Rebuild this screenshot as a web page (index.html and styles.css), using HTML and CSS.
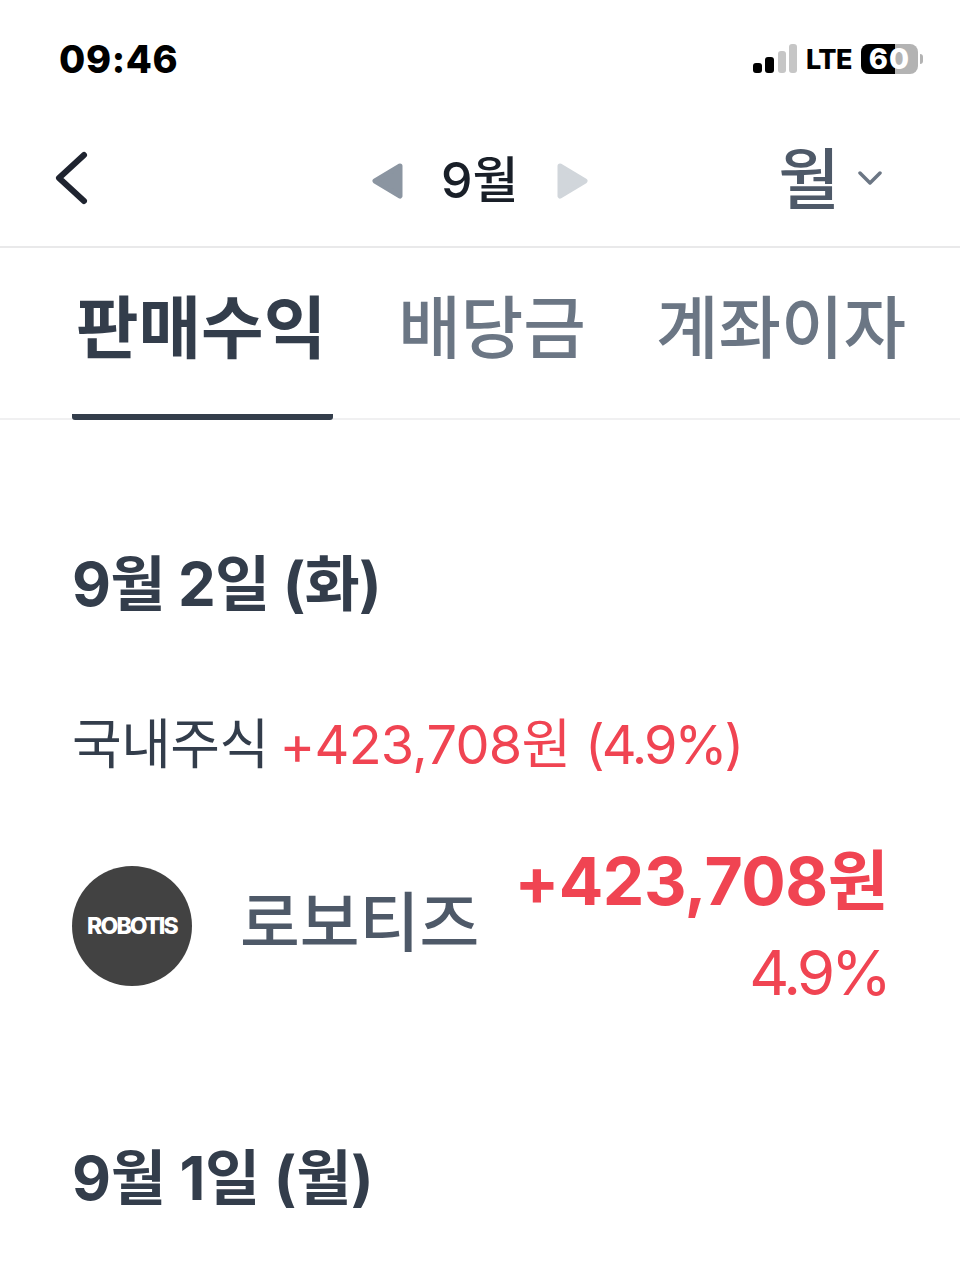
FILE: index.html
```html
<!DOCTYPE html>
<html lang="ko">
<head>
<meta charset="utf-8">
<title>판매수익</title>
<link rel="stylesheet" href="styles.css">
</head>
<body>
<div class="status">
  <span class="time">09:46</span>
  <div class="status-right">
    <svg class="signal" width="44" height="30" viewBox="0 0 44 30"><rect x="0" y="19" width="9" height="10" rx="3" fill="#000"/><rect x="12" y="13" width="9" height="16" rx="3" fill="#000"/><rect x="25" y="7" width="8" height="22" rx="3" fill="#c6c6c6"/><rect x="36" y="0" width="8" height="29" rx="3" fill="#c6c6c6"/></svg>
    <span class="lte">LTE</span>
    <span class="battery"><span class="batt-fill"></span><span class="batt-text">60</span></span>
    <span class="batt-cap"></span>
  </div>
</div>
<header class="nav">
  <svg class="back" width="36" height="60" viewBox="0 0 36 60"><path d="M30 7 L5 30 L30 53" fill="none" stroke="#1f2430" stroke-width="6" stroke-linecap="round" stroke-linejoin="round"/></svg>
  <div class="month">
    <svg class="arrow" width="34" height="38" viewBox="0 0 34 38"><path d="M30 4 L5 19 L30 34 Z" fill="#8b95a1" stroke="#8b95a1" stroke-width="5" stroke-linejoin="round"/></svg>
    <span class="month-label">9월</span>
    <svg class="arrow" width="34" height="38" viewBox="0 0 34 38"><path d="M4 4 L29 19 L4 34 Z" fill="#d1d6db" stroke="#d1d6db" stroke-width="5" stroke-linejoin="round"/></svg>
  </div>
  <div class="unit">
    <span class="unit-label">월</span>
    <svg width="24" height="16" viewBox="0 0 24 16"><path d="M2 3 L12 13 L22 3" fill="none" stroke="#6b7684" stroke-width="3.5" stroke-linecap="round" stroke-linejoin="round"/></svg>
  </div>
</header>
<nav class="tabs">
  <div class="tab active">판매수익</div>
  <div class="tab">배당금</div>
  <div class="tab">계좌이자</div>
</nav>
<main class="content">
  <h2 class="date">9월 2일 (화)</h2>
  <p class="summary">국내주식 <span class="red">+423,708원 <span class="pct">(4.9%)</span></span></p>
  <div class="row">
    <div class="logo"><span class="logo-text">ROBOTIS</span></div>
    <div class="name">로보티즈</div>
    <div class="amounts">
      <div class="amount">+423,708원</div>
      <div class="percent">4.9%</div>
    </div>
  </div>
  <h2 class="date second">9월 1일 (월)</h2>
</main>
</body>
</html>
```
FILE: styles.css
```css
* { box-sizing: border-box; }
html, body { margin: 0; padding: 0; }
body {
  width: 960px;
  height: 1273px;
  overflow: hidden;
  background: #fff;
  font-family: "Noto Sans CJK KR", "Inter", sans-serif;
  color: #333d4b;
}
.status {
  height: 116px;
  padding: 33px 37px 0 59px;
  display: flex;
  justify-content: space-between;
  align-items: flex-start;
}
.time {
  font-family: "Inter", sans-serif;
  font-weight: 800;
  font-size: 38px;
  line-height: 52px;
  color: #000;
  letter-spacing: 0.6px;
}
.status-right { display: flex; align-items: center; height: 52px; }
.lte {
  font-family: "Inter", sans-serif;
  font-weight: 800;
  font-size: 27px;
  color: #000;
  margin-left: 9px;
  letter-spacing: -0.5px;
}
.battery {
  position: relative;
  display: block;
  width: 57px;
  height: 30px;
  margin-left: 9px;
  border-radius: 8px;
  background: #b3b3b3;
}
.batt-fill { position: absolute; left: 0; top: 0; bottom: 0; width: 34px; background: #000; border-radius: 8px 0 0 8px; }
.batt-text {
  position: relative;
  display: block;
  text-align: center;
  font-family: "Inter", sans-serif;
  font-weight: 800;
  font-size: 29px;
  line-height: 30px;
  letter-spacing: 1px;
  color: #fff;
}
.batt-cap { width: 3px; height: 10px; background: #b3b3b3; border-radius: 0 3px 3px 0; margin-left: 2px; }
.nav {
  height: 132px;
  display: flex;
  align-items: center;
  padding: 0 78px 6px 54px;
  border-bottom: 2px solid #e9e9ea;
}
.back { flex: none; }
.month {
  display: flex;
  align-items: center;
  gap: 37px;
  margin-left: 280px;
}
.arrow { position: relative; top: 3px; }
.month-label { font-size: 50px; font-weight: 500; color: #191f28; line-height: 60px; font-family: "Inter", "Noto Sans CJK KR", sans-serif; padding-top: 4px; }
.unit { margin-left: auto; display: flex; align-items: center; gap: 18px; }
.unit-label { font-size: 67px; font-weight: 500; color: #4e5968; line-height: 70px; margin-top: -6px; }
.tabs {
  height: 172px;
  display: flex;
  padding: 0 0 0 72px;
  gap: 65px;
  border-bottom: 2px solid #f0f0f1;
}
.tab {
  height: 172px;
  padding-top: 34px;
  font-size: 68px;
  line-height: 84px;
  font-weight: 500;
  color: #6b7684;
  white-space: nowrap;
}
.tab + .tab + .tab { margin-left: 5px; }
.tab.active {
  font-weight: 700;
  color: #333d4b;
  border-bottom: 6px solid #333d4b;
  padding: 34px 7px 0 4px;
  border-radius: 0 0 3px 3px;
}
.content { padding: 0 72px; }
.date {
  margin: 124px 0 0;
  font-size: 60px;
  line-height: 80px;
  font-weight: 700;
  color: #333d4b;
  font-family: "Inter", "Noto Sans CJK KR", sans-serif;
  letter-spacing: -0.8px;
}
.summary {
  margin: 85px 0 0;
  font-size: 54px;
  line-height: 72px;
  font-weight: 400;
  color: #333d4b;
  font-family: "Inter", "Noto Sans CJK KR", sans-serif;
  letter-spacing: -0.5px;
  word-spacing: -4px;
  white-space: nowrap;
}
.red { color: #f04452; letter-spacing: -0.7px; word-spacing: 0; }
.pct { letter-spacing: -3px; }
.row {
  display: flex;
  align-items: center;
  margin-top: 58px;
}
.logo {
  width: 120px;
  height: 120px;
  flex: none;
  border-radius: 50%;
  background: #424242;
  display: flex;
  align-items: center;
  justify-content: center;
}
.logo-text {
  font-family: "Inter", sans-serif;
  color: #fff;
  font-weight: 800;
  font-size: 23px;
  letter-spacing: -1.8px;
}
.name {
  margin: 0 0 16px 48px;
  font-size: 65px;
  font-weight: 500;
  color: #4e5968;
  line-height: 84px;
}
.amounts { margin: 0 0 4px auto; text-align: right; }
.amount {
  font-family: "Inter", "Noto Sans CJK KR", sans-serif;
  font-size: 66px;
  font-weight: 700;
  line-height: 84px;
  color: #f04452;
  letter-spacing: -0.5px;
}
.percent {
  font-family: "Inter", "Noto Sans CJK KR", sans-serif;
  font-size: 62px;
  font-weight: 400;
  line-height: 72px;
  margin-top: 14px;
  letter-spacing: -4px;
  color: #f04452;
}
.date.second { margin-top: 125px; letter-spacing: -0.3px; }
```
